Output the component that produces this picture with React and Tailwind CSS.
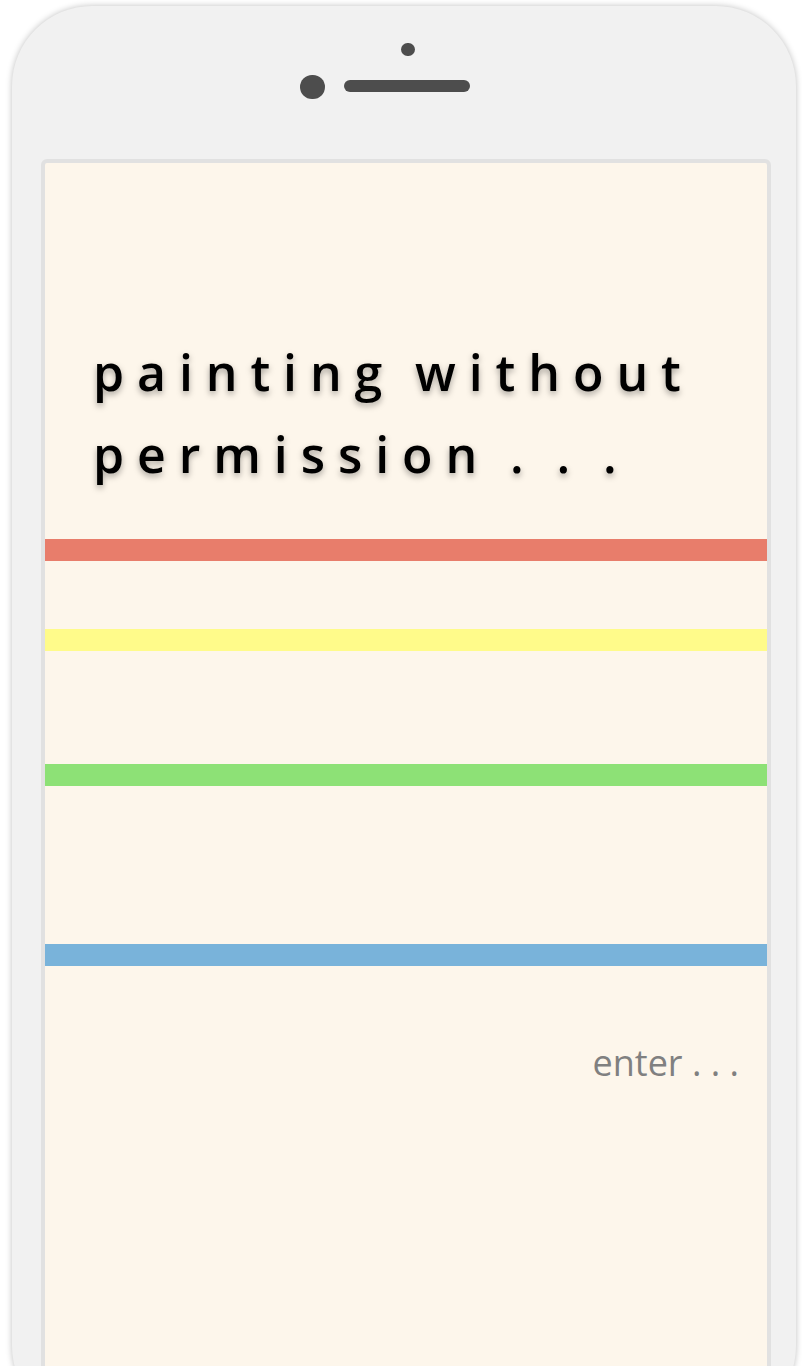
export default function App() {
  return (
    <div className="w-[802px] h-[1366px] overflow-hidden bg-white relative">
      <div className="ml-[12px] mt-[6px] w-[784px] h-[1420px] bg-[#f1f1f1] rounded-[80px] shadow-[0_0_6px_rgba(0,0,0,0.25)] flex flex-col">
        <div className="h-[153px] relative shrink-0">
          <div className="absolute left-[389px] top-[37px] w-[14px] h-[13px] rounded-full bg-[#4d4d4d]" />
          <div className="absolute left-[288px] top-[69px] w-[25px] h-[24px] rounded-full bg-[#4d4d4d]" />
          <div className="absolute left-[332px] top-[74px] w-[126px] h-[12px] rounded-full bg-[#4d4d4d]" />
        </div>
        <div className="ml-[29px] mr-[25px] border-[4px] border-[#e1e1e1] rounded-[6px] bg-[#fdf6eb] flex-1 flex flex-col">
          <div
            className="pl-[48px] pt-[168px] text-[50px] leading-[82px] tracking-[12.9px] [word-spacing:-6px] font-semibold text-black font-['Open_Sans',sans-serif] [text-shadow:0_3px_6px_rgba(0,0,0,0.35)]"
          >
            painting without
            <br />
            permission . . .
          </div>
          <div className="mt-[44px] h-[22px] bg-[#e87d6b]" />
          <div className="mt-[68px] h-[22px] bg-[#fffb8a]" />
          <div className="mt-[113px] h-[22px] bg-[#8de176]" />
          <div className="mt-[158px] h-[22px] bg-[#79b3da]" />
          <div className="mt-[77px] pr-[28px] text-right text-[36px] leading-[40px] text-[#808080] font-['Open_Sans',sans-serif]">
            enter . . .
          </div>
        </div>
      </div>
    </div>
  );
}
